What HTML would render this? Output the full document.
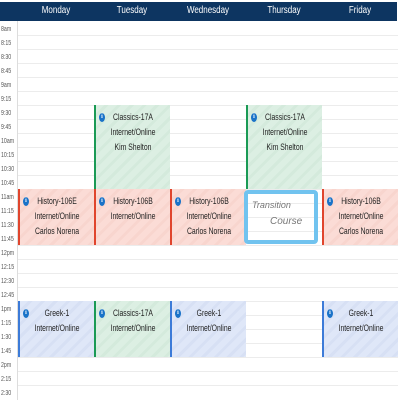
<!DOCTYPE html><html><head><style>
body{margin:0;width:400px;height:400px;background:#fff;position:relative;overflow:hidden;font-family:"Liberation Sans",sans-serif}
.hd{position:absolute;left:0;top:2px;width:397px;height:19px;background:#0d3561}
.hd span{position:absolute;top:3px;width:76px;text-align:center;color:#fff;font-size:10px;transform:scaleX(.8)}
.row{position:absolute;left:18px;width:380px;height:14px;border-top:1px solid #ececec;box-sizing:border-box}
.t{position:absolute;left:1px;font-size:7.5px;color:#555;transform:scaleX(.7);transform-origin:left}
.tc{position:absolute;left:17px;top:21px;width:1px;height:379px;background:#ddd}
.ev{position:absolute;width:76px;box-sizing:border-box;border-left:2px solid}
.ev p{margin:0;position:absolute;left:-20px;right:-20px;top:5px;font-size:9.5px;color:#222;text-align:center;line-height:15px;transform:scaleX(.72)}
.r{background:repeating-linear-gradient(135deg,#fbdcd6 0 6px,#f8d5ce 6px 9px);border-color:#e0452d}
.g{background:repeating-linear-gradient(135deg,#dcefe3 0 6px,#d4eadc 6px 9px);border-color:#1a9a55}
.b{background:repeating-linear-gradient(135deg,#dfe7f8 0 6px,#d7e0f4 6px 9px);border-color:#3c7bd8}
.i{position:absolute;left:3px;top:8px;width:6px;height:9px;border-radius:50%;background:#1a73c8;color:#fff;font-size:6px;line-height:9px;font-weight:bold;text-align:center;font-family:"Liberation Serif",serif;z-index:1}
</style></head><body>
<div class="hd"><span style="left:18px">Monday</span><span style="left:94px">Tuesday</span><span style="left:170px">Wednesday</span><span style="left:246px">Thursday</span><span style="left:322px">Friday</span></div>
<div class="tc"></div>
<div class="row" style="top:35px"></div><div class="row" style="top:49px"></div><div class="row" style="top:63px"></div><div class="row" style="top:77px"></div><div class="row" style="top:91px"></div><div class="row" style="top:105px"></div><div class="row" style="top:119px"></div><div class="row" style="top:133px"></div><div class="row" style="top:147px"></div><div class="row" style="top:161px"></div><div class="row" style="top:175px"></div><div class="row" style="top:189px"></div><div class="row" style="top:203px"></div><div class="row" style="top:217px"></div><div class="row" style="top:231px"></div><div class="row" style="top:245px"></div><div class="row" style="top:259px"></div><div class="row" style="top:273px"></div><div class="row" style="top:287px"></div><div class="row" style="top:301px"></div><div class="row" style="top:315px"></div><div class="row" style="top:329px"></div><div class="row" style="top:343px"></div><div class="row" style="top:357px"></div><div class="row" style="top:371px"></div><div class="row" style="top:385px"></div>
<div class="t" style="top:24px">8am</div><div class="t" style="top:38px">8:15</div><div class="t" style="top:52px">8:30</div><div class="t" style="top:66px">8:45</div><div class="t" style="top:80px">9am</div><div class="t" style="top:94px">9:15</div><div class="t" style="top:108px">9:30</div><div class="t" style="top:122px">9:45</div><div class="t" style="top:136px">10am</div><div class="t" style="top:150px">10:15</div><div class="t" style="top:164px">10:30</div><div class="t" style="top:178px">10:45</div><div class="t" style="top:192px">11am</div><div class="t" style="top:206px">11:15</div><div class="t" style="top:220px">11:30</div><div class="t" style="top:234px">11:45</div><div class="t" style="top:248px">12pm</div><div class="t" style="top:262px">12:15</div><div class="t" style="top:276px">12:30</div><div class="t" style="top:290px">12:45</div><div class="t" style="top:304px">1pm</div><div class="t" style="top:318px">1:15</div><div class="t" style="top:332px">1:30</div><div class="t" style="top:346px">1:45</div><div class="t" style="top:360px">2pm</div><div class="t" style="top:374px">2:15</div><div class="t" style="top:388px">2:30</div>

<div class="ev g" style="left:94px;top:105px;height:84px"><div class="i">i</div><p>Classics-17A<br>Internet/Online<br>Kim Shelton</p></div>
<div class="ev g" style="left:246px;top:105px;height:84px"><div class="i">i</div><p>Classics-17A<br>Internet/Online<br>Kim Shelton</p></div>

<div class="ev r" style="left:18px;top:189px;height:56px"><div class="i">i</div><p>History-106E<br>Internet/Online<br>Carlos Norena</p></div>
<div class="ev r" style="left:94px;top:189px;height:56px"><div class="i">i</div><p>History-106B<br>Internet/Online</p></div>
<div class="ev r" style="left:170px;top:189px;height:56px"><div class="i">i</div><p>History-106B<br>Internet/Online<br>Carlos Norena</p></div>
<div class="ev r" style="left:322px;top:189px;height:56px"><div class="i">i</div><p>History-106B<br>Internet/Online<br>Carlos Norena</p></div>

<div style="position:absolute;left:244px;top:190px;width:74px;height:54px;box-sizing:border-box;border:4px solid #71c3ef;border-radius:4px;color:#777;font-size:9px;font-style:italic">
<div style="position:absolute;left:4px;top:6px">Transition</div><div style="position:absolute;left:22px;top:22px;font-size:10px">Course</div></div>

<div class="ev b" style="left:18px;top:301px;height:56px"><div class="i">i</div><p>Greek-1<br>Internet/Online</p></div>
<div class="ev g" style="left:94px;top:301px;height:56px"><div class="i">i</div><p>Classics-17A<br>Internet/Online</p></div>
<div class="ev b" style="left:170px;top:301px;height:56px"><div class="i">i</div><p>Greek-1<br>Internet/Online</p></div>
<div class="ev b" style="left:322px;top:301px;height:56px"><div class="i">i</div><p>Greek-1<br>Internet/Online</p></div>
</body></html>
